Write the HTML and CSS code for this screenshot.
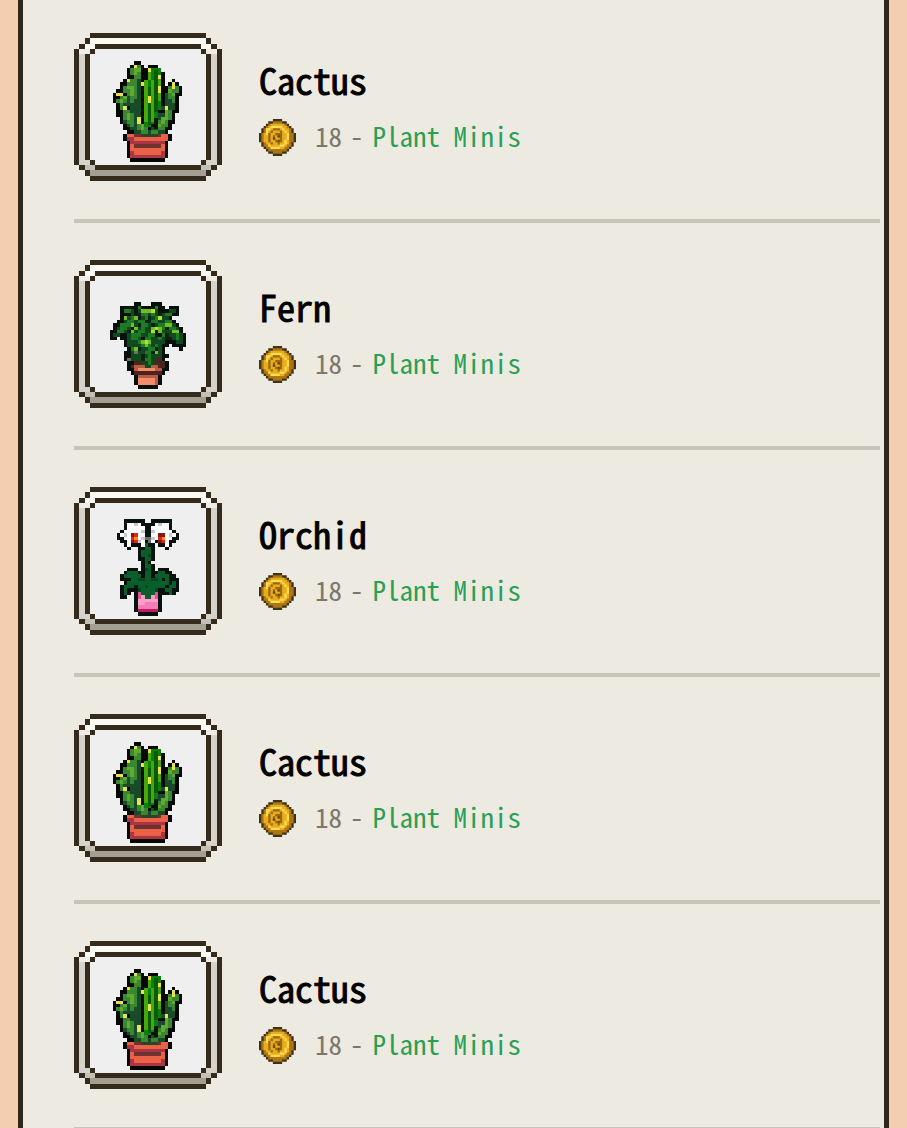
FILE: index.html
```html
<!DOCTYPE html>
<html lang="en">
<head>
<meta charset="utf-8">
<meta name="viewport" content="width=device-width, initial-scale=1">
<title>Plant Minis</title>
<link rel="stylesheet" href="styles.css">
</head>
<body>
<svg class="sprites" aria-hidden="true">
  <defs>
    <symbol id="frame" viewBox="0 0 28 28">
      <path fill="#efefef" d="M3 3h22v22H3z"/>
      <path fill="#fbf9f4" d="M3 1h22v1H3zM2 2h2v1H2zM24 2h2v1H24z"/>
      <path fill="#d6d3ca" d="M1 3h1v22H1zM26 3h1v22H26zM2 24h1v1H2zM25 24h1v1H25z"/>
      <path fill="#efece5" d="M1 3h2v1H1zM25 3h2v1H25z"/>
      <path fill="#c4c0b5" d="M2 25h2v1H2zM24 25h2v1H24z"/>
      <path fill="#a39f93" d="M3 26h22v1H3z"/>
      <path fill="#352b1c" d="M3 0h22v1H3zM2 1h1v1H2zM25 1h1v1H25zM1 2h1v1H1zM26 2h1v1H26zM0 3h1v22H0zM27 3h1v22H27zM1 25h1v1H1zM26 25h1v1H26zM2 26h1v1H2zM25 26h1v1H25zM3 27h22v1H3zM4 2h20v1H4zM4 25h20v1H4zM2 4h1v20H2zM25 4h1v20H25zM3 3h1v1H3zM24 3h1v1H24zM3 24h1v1H3zM24 24h1v1H24z"/>
    </symbol>

    <symbol id="cactus" viewBox="0 -.5 20 29">
      <path stroke="#050805" d="M6 0h2M5 1h4M10 1h3M4 2h10M4 3h11M4 4h11M3 5h12M17 5h1M2 6h13M16 6h3M2 7h13M15 7h5M1 8h14M15 8h5M0 9h20M0 10h19M0 11h19M1 12h18M1 13h18M1 14h18M1 15h17M2 16h16M2 17h16M3 18h14M3 19h14M4 20h12M3 21h14M3 22h14M4 23h12M4 24h12M4 25h12M4 26h12M4 27h12M5 28h10"/>
      <path stroke="#194b2b" d="M5 3h3M6 4h2M5 5h3M6 6h2M6 7h2M6 8h2M6 9h2M4 10h4M3 11h5M3 12h5M5 13h3M5 14h3M5 15h3M5 16h2M3 17h4M4 18h3M5 19h2M6 20h9M15 9h1M15 10h2M15 11h2M15 12h3M14 13h1M16 13h2M13 15h2M13 16h1M12 18h1M11 19h2"/>
      <path stroke="#3a8732" d="M7 1h1M5 2h3M5 3h3M6 4h2M5 5h2M4 6h3M3 7h4M3 8h4M4 9h3M2 10h2M5 10h2M1 11h3M5 11h1M2 12h1M2 13h1M3 14h2M3 15h3M3 16h3M4 17h2M5 18h1M7 18h2M7 19h3M8 20h2M16 7h3M16 8h3M16 9h2M16 10h2M17 11h1M15 14h2M15 15h2M14 16h3M13 17h3M13 18h3M13 19h2M11 20h2"/>
      <path stroke="#60aa31" d="M6 2h2M6 3h1M4 7h2M5 8h1M5 9h1M16 8h1M17 9h1M3 10h1M2 11h1M4 15h1M4 16h1M15 14h1M15 15h1M14 16h2M14 17h1M13 18h1M8 18h1M8 19h1"/>
      <path stroke="#078309" stroke-width="4" d="M10 3.5h4M9 7.5h5M9 11.5h5M9 15.5h4"/>
      <path stroke="#078309" d="M10 2h3M9 18h2"/>
      <path fill="#46a80d" d="M9 5h1v12H9zM10 2h1v3H10zM11 5h1v12H11zM13 4h1v7H13z"/>
      <path fill="#075b0b" d="M10 7h1v11H10zM12 2h1v12H12z"/>
      <path fill="#051607" d="M8 7h1v1H8zM8 9h1v1H8zM8 11h1v1H8zM8 13h1v1H8zM8 15h1v1H8zM12 16h1v3H12z"/>
      <path stroke="#e6e34d" d="M6 1h1M10 2h1M4 5h1M13 4h1M8 6h1M13 7h1M13 8h1M17 6h1M17 7h1M1 9h2M10 10h1M10 11h1M3 13h1M15 13h1M7 16h1M7 17h1"/>
      <path stroke="#eb6146" d="M4 21h2M14 21h2M6 22h8M5 24h10M5 25h10M5 26h10M14 22h2"/>
      <path stroke="#a93545" d="M4 22h2M5 23h10M5 27h10M14 26h1M5 26h1"/>
      <path stroke="#6e3230" d="M6 21h8M6 24h8"/>
      <path stroke="#2c4328" d="M8 21h5"/>
    </symbol>

    <symbol id="fern" viewBox="0 -.5 22 25">
      <path stroke="#07100b" d="M7 0h2M12 0h3M3 1h3M6 1h10M17 1h3M3 2h17M3 3h17M3 4h15M2 5h17M1 6h19M1 7h20M0 8h21M0 9h22M0 10h2M3 10h19M4 11h18M4 12h13M18 12h4M5 13h11M20 13h1M4 14h12M4 15h13M4 16h12M5 17h12M5 18h12M5 19h12M6 20h10M7 21h8M7 22h8M7 23h8M8 24h6"/>
      <path stroke="#11491f" d="M4 2h3M8 2h6M17 2h2M6 3h1M9 3h5M15 3h3M5 4h3M9 4h2M12 4h5M4 5h6M12 5h6M3 6h5M9 6h3M13 6h6M2 7h4M8 7h4M13 7h7M2 8h3M7 8h6M15 8h5M1 9h2M5 9h8M17 9h4M5 10h4M11 10h5M18 10h3M5 11h5M11 11h5M19 11h2M5 12h10M6 13h9M6 14h9M6 15h3M10 15h5M6 16h3M10 16h4M8 17h5M10 18h2"/>
      <path stroke="#1f7a25" d="M8 1h1M13 1h1M4 2h2M11 2h2M9 3h2M12 3h1M16 3h2M6 4h2M10 4h1M13 4h2M5 5h2M8 5h2M12 5h2M16 5h2M3 6h3M9 6h2M14 6h4M3 7h2M9 7h1M14 7h2M17 7h2M2 8h2M8 8h2M14 8h1M18 8h2M6 9h3M11 9h2M15 9h1M19 9h1M6 10h2M10 10h2M14 10h1M19 10h1M8 11h3M9 12h3M13 12h1M6 13h1M11 13h2M10 14h2M11 15h1M10 16h2M11 17h1"/>
      <path stroke="#0b2213" d="M7 3h2M14 3h1M11 4h1M8 4h1M10 5h2M8 6h1M12 6h1M6 7h2M16 7h1M5 8h2M16 9h1M13 9h1M16 10h2M8 13h1M12 14h1M9 15h1M9 16h1M13 13h1"/>
      <path stroke="#73bd20" d="M9 2h1M10 2h2M4 4h1M7 4h1M14 4h1M6 6h1M7 7h1M12 7h3M16 6h2M6 8h1M12 8h1M14 8h1M18 8h2M9 11h3M7 13h1M13 14h1M10 12h1"/>
      <path stroke="#b0e31c" d="M12 2h1M14 4h1M13 7h1M12 8h1M10 11h1"/>
      <path stroke="#62746c" d="M5 16h1M7 14h1"/>
      <path stroke="#4c241d" d="M7 17h2M13 16h2M13 17h3M6 18h2M12 18h4M7 20h8"/>
      <path stroke="#b85b47" d="M7 18h3M12 18h2M7 19h8M8 21h6"/>
      <path stroke="#f18d6a" d="M8 19h5M8 22h6M8 23h5"/>
      <path stroke="#ba5948" d="M13 22h1M13 23h1M14 19h1"/>
    </symbol>

    <symbol id="orchid" viewBox="0 -.5 18 28">
      <path stroke="#08110d" d="M2 0h6M10 0h6M2 1h7M9 1h7M2 2h14M1 3h16M0 4h18M0 5h18M1 6h3M4 6h11M14 6h3M2 7h14M3 8h1M6 8h5M14 8h1M6 9h5M6 10h5M6 11h5M7 12h3M7 13h4M3 14h3M7 14h4M12 14h3M2 15h9M11 15h5M1 16h16M1 17h17M2 18h16M1 19h17M1 20h17M1 21h3M5 21h12M1 22h2M5 22h8M5 23h8M5 24h8M5 25h8M5 26h8M6 27h6"/>
      <path stroke="#fff" d="M3 1h4M11 1h4M3 2h5M10 2h5M2 3h6M10 3h6M1 4h7M10 4h7M2 5h7M9 5h7M3 6h1M6 6h2M10 6h1M14 6h1M3 7h1M7 7h1M11 7h1M14 7h1"/>
      <path stroke="#c5c5dc" d="M5 1h1M7 3h1M12 1h1M10 3h1M2 4h1M15 4h1M7 5h1M10 5h1M6 6h1"/>
      <path stroke="#8b1714" d="M4 4h2M4 5h2M4 6h2M12 4h2M12 5h2M12 6h2"/>
      <path stroke="#d92c16" d="M5 4h1M4 5h1M5 6h1M12 5h1M13 6h1"/>
      <path stroke="#ff8a24" d="M5 5h1M13 5h1"/>
      <path stroke="#6b716e" d="M8 5h2M9 6h1"/>
      <path stroke="#095f2b" d="M8 7h1M8 8h2M7 9h3M7 10h3M8 11h2M8 12h1M8 13h2M8 14h2M3 15h3M8 15h2M12 15h2M2 16h5M8 16h2M11 16h4M4 17h9M14 17h1M3 18h3M6 18h9M16 18h1M2 19h3M6 19h8M15 19h2M2 20h1M6 20h6M14 20h2M2 21h1M7 21h4M15 21h1M8 22h2"/>
      <path stroke="#06451f" d="M9 10h1M8 14h1M6 17h2M10 17h2M8 19h1M6 20h1M11 20h1"/>
      <path stroke="#de5693" d="M6 21h1M11 21h1M6 22h2M10 22h2"/>
      <path stroke="#ff9fcc" d="M6 23h6"/>
      <path stroke="#f47db5" d="M6 24h6M6 25h6"/>
      <path stroke="#fa9bc8" d="M7 22h1M10 22h1M6 24h2"/>
      <path stroke="#c31b61" d="M6 26h6"/>
    </symbol>

    <symbol id="coin" viewBox="0 -.5 16 16">
      <path stroke="#3e3218" d="M6 0h4M4 1h8M3 2h10M2 3h12M1 4h14M1 5h14M0 6h16M0 7h16M0 8h16M0 9h16M1 10h14M1 11h14M2 12h12M3 13h10M4 14h8M6 15h4"/>
      <path stroke="#ad7513" d="M6 1h4M4 2h8M3 3h10M2 4h12M2 5h12M1 6h14M1 7h14M1 8h14M1 9h14M2 10h12M2 11h12M3 12h10M4 13h8M6 14h4"/>
      <path stroke="#e8ae19" d="M5 2h6M4 3h8M3 4h10M3 5h10M2 6h11M2 7h11M2 8h11M2 9h11M3 10h10M4 11h8M5 12h6"/>
      <path stroke="#ffdc58" d="M5 3h5M3 4h2M10 4h1M3 5h1M11 5h1M3 6h1M12 6h1M12 7h1M12 8h1M11 9h1M11 10h1M4 11h1M9 11h2M5 12h4"/>
      <path stroke="#9d6710" d="M6 4h3M5 5h1M9 5h1M4 6h1M7 6h3M4 7h1M6 7h1M8 7h2M4 8h1M6 8h1M9 8h1M4 9h1M7 9h1M9 9h1M5 10h1M8 10h1"/>
      <path stroke="#654711" d="M8 7h1M8 9h1M6 8h1"/>
    </symbol>
  </defs>
</svg>

<main class="panel">
  <ul class="list">
    <li class="item">
      <svg class="thumb" viewBox="0 0 148 148" role="img" aria-label="Cactus"><use href="#frame" width="148" height="148"/><use href="#cactus" x="39" y="28" width="69" height="101"/></svg>
      <div class="info">
        <h2 class="name">Cactus</h2>
        <div class="meta"><svg class="coin" aria-hidden="true"><use href="#coin"/></svg><span class="price">18</span><span class="dash">-</span><span class="kind">Plant Minis</span></div>
      </div>
    </li>
    <li class="item">
      <svg class="thumb" viewBox="0 0 148 148" role="img" aria-label="Fern"><use href="#frame" width="148" height="148"/><use href="#fern" x="36" y="42" width="76" height="87"/></svg>
      <div class="info">
        <h2 class="name">Fern</h2>
        <div class="meta"><svg class="coin" aria-hidden="true"><use href="#coin"/></svg><span class="price">18</span><span class="dash">-</span><span class="kind">Plant Minis</span></div>
      </div>
    </li>
    <li class="item">
      <svg class="thumb" viewBox="0 0 148 148" role="img" aria-label="Orchid"><use href="#frame" width="148" height="148"/><use href="#orchid" x="43" y="32" width="62" height="97"/></svg>
      <div class="info">
        <h2 class="name">Orchid</h2>
        <div class="meta"><svg class="coin" aria-hidden="true"><use href="#coin"/></svg><span class="price">18</span><span class="dash">-</span><span class="kind">Plant Minis</span></div>
      </div>
    </li>
    <li class="item">
      <svg class="thumb" viewBox="0 0 148 148" role="img" aria-label="Cactus"><use href="#frame" width="148" height="148"/><use href="#cactus" x="39" y="28" width="69" height="101"/></svg>
      <div class="info">
        <h2 class="name">Cactus</h2>
        <div class="meta"><svg class="coin" aria-hidden="true"><use href="#coin"/></svg><span class="price">18</span><span class="dash">-</span><span class="kind">Plant Minis</span></div>
      </div>
    </li>
    <li class="item">
      <svg class="thumb" viewBox="0 0 148 148" role="img" aria-label="Cactus"><use href="#frame" width="148" height="148"/><use href="#cactus" x="39" y="28" width="69" height="101"/></svg>
      <div class="info">
        <h2 class="name">Cactus</h2>
        <div class="meta"><svg class="coin" aria-hidden="true"><use href="#coin"/></svg><span class="price">18</span><span class="dash">-</span><span class="kind">Plant Minis</span></div>
      </div>
    </li>
  </ul>
</main>
</body>
</html>
```
FILE: styles.css
```css
* { box-sizing: border-box; }

body {
  margin: 0;
  padding: 0 18px;
  height: 100vh;
  overflow: hidden;
  background: #f3ceb1;
  color: #000;
  font-family: "Noto Sans Mono CJK JP", "DejaVu Sans Mono", monospace;
}

.sprites {
  position: absolute;
  width: 0;
  height: 0;
}

.panel {
  min-height: 100vh;
  padding: 0 4px 0 51px;
  background: #eceae1;
  border: solid #30271c;
  border-width: 0 5px;
}

.list {
  margin: 0;
  padding: 0;
  list-style: none;
}

.item {
  display: flex;
  gap: 37px;
  padding: 37px 0 38px;
  border-bottom: 4px solid #c8c5b8;
}

.item:first-child { padding-top: 33px; }

.thumb {
  flex: none;
  width: 148px;
  height: 148px;
  shape-rendering: crispEdges;
}

.info { padding-top: 22px; }

.name {
  margin: 0;
  font-size: 36px;
  font-weight: 500;
  line-height: 48px;
  -webkit-text-stroke: 1px;
}

.meta {
  display: flex;
  align-items: flex-start;
  margin-top: 16px;
  color: #7d776b;
  font-size: 27px;
  line-height: 33px;
}

.coin {
  width: 37px;
  height: 37px;
  margin-right: 19px;
}

.dash { margin: 0 9px 0 8px; }

.kind { color: #2b9f53; }
```
